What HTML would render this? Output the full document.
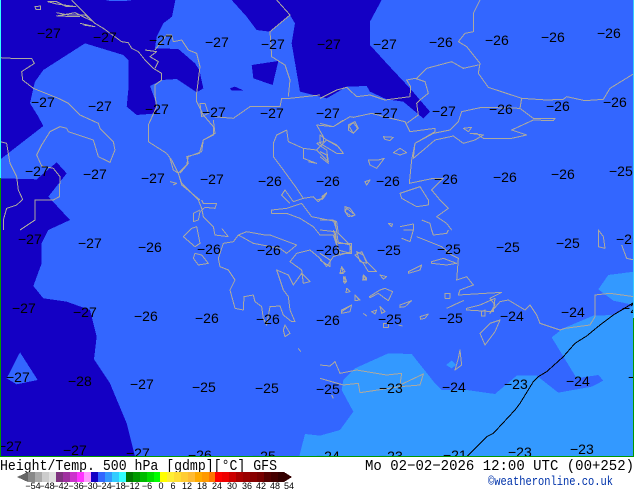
<!DOCTYPE html>
<html><head><meta charset="utf-8"><style>
html,body{margin:0;padding:0;background:#fff;width:634px;height:490px;overflow:hidden}
svg{display:block}
.c polyline,.c polygon{fill:none;stroke:#aca99f;stroke-width:3;stroke-linejoin:round;shape-rendering:crispEdges}
.l text{font:14px "Liberation Sans",sans-serif;fill:#000}
.t text{font:9px "Liberation Sans",sans-serif;fill:#000;text-anchor:middle}
</style></head><body>
<svg width="634" height="490" viewBox="0 0 634 490" xmlns="http://www.w3.org/2000/svg">
<defs><clipPath id="m"><rect x="0" y="0" width="634" height="456"/></clipPath></defs>
<rect width="634" height="490" fill="#fff"/>
<g clip-path="url(#m)">
<rect width="634" height="460" fill="#3366ff"/>
<g transform="scale(.33333)" shape-rendering="crispEdges">
<polygon fill="#1400c4" points="0,0 526,0 516,50 490,70 470,110 465,145 535,147 585,190 598,210 610,265 590,277 530,237 485,240 450,258 465,300 472,340 410,345 380,320 385,270 385,180 370,165 255,130 130,210 105,245 100,265 90,310 115,350 130,378 5,475 0,475"/>
<polygon fill="#1400c4" points="0,535 110,538 170,487 200,520 145,590 210,660 145,690 125,730 125,790 100,858 130,895 200,905 270,930 290,1010 282,1078 330,1150 380,1270 405,1370 0,1370"/>
<polygon fill="#3366ff" points="60,1057 113,1140 50,1153 20,1135"/>
<polygon fill="#3366ff" points="315,0 400,0 375,3 330,3"/>
<polygon fill="#1400c4" points="695,0 1145,0 1110,65 1110,135 1160,190 1230,265 1290,335 1270,355 1210,305 1160,298 1110,275 1100,258 1040,260 980,295 960,290 900,275 875,130 885,70 870,45 810,95 770,90 740,50"/>
<polygon fill="#1400c4" points="755,195 835,183 818,255 760,235"/>
<polygon fill="#1400c4" points="690,265 705,260 732,272 695,272"/>
</g>
<g transform="translate(320,230) scale(.33333)" shape-rendering="crispEdges">
<polygon fill="#3399ff" points="-65,690 -45,612 0,617 60,600 100,545 65,480 70,450 105,415 205,370 275,372 345,460 365,480 440,480 525,492 590,437 650,437 715,488 815,470 850,452 835,435 770,445 695,322 730,295 820,257 880,255 942,225 942,690"/>
<polygon fill="#3399ff" points="865,135 942,125 942,225 880,212 835,178"/>
<polygon fill="#3399ff" points="378,405 395,392 408,405 395,415"/>
</g>
<g class="c" transform="scale(.33333)">
<polyline points="215,0 240,25 285,70 310,85 365,125 385,128 395,145 415,155 435,180 460,205 485,220 485,240 465,255 465,285 470,320 445,375 445,425 500,460 515,480 535,520 545,555 600,600"/>
<polygon points="105,20 122,18 122,28 108,28"/>
<polyline points="143,5 170,5 200,20 228,20 170,12 143,5"/>
<polyline points="170,38 205,45 255,45 280,65 225,38 170,48 240,50"/>
<polyline points="240,70 285,80 250,75"/>
<polyline points="0,173 35,175 95,175 103,190 65,215 68,240 100,265 175,295 205,310 240,345 295,370 300,385 340,425 345,450 330,487 295,470 280,420 205,395 200,385 180,380 150,395 125,435 110,465 125,498 160,505 180,530 178,590 160,600 105,600 105,660 60,690"/>
<polyline points="0,425 20,430 30,490 50,530 55,570 68,598 50,615 20,625 10,660 10,690"/>
<polyline points="435,150 470,155 450,170 475,185 465,205"/>
<polyline points="465,150 500,105 515,105 520,125 545,120 565,150 590,160 600,200 590,280 590,305 610,345 640,380 640,405 610,420 598,460 560,470 565,490 540,520"/>
<polygon points="600,310 615,310 625,340 605,350"/>
<polyline points="640,350 700,355 750,320 840,320 845,295 870,295 960,285"/>
<polyline points="865,290 870,240 855,195 815,170 810,95 870,45 830,0"/>
</g>
<g class="c" transform="translate(320,0) scale(.33333)">
<polyline points="480,0 460,40 460,95 435,100 415,125 440,140 480,190 475,220 505,262 605,295 680,300 730,298 740,290 795,302 850,298 870,265 940,222"/>
<polyline points="475,195 430,205 395,185 320,205 290,235"/>
<polyline points="605,295 600,325 640,355 705,355 700,362 640,360 575,390 620,405 575,415 490,415 470,400 450,400 490,405 465,420 430,430 400,408 345,420 310,450 280,475 285,430 345,395 345,385 270,395 255,365 200,352 155,340 100,352 90,350 40,380 0,370"/>
<polyline points="0,295 50,270 80,262 110,290 150,285 195,300 270,290 272,260 260,240 285,235 315,245 325,280 300,300 290,310 295,345 260,370"/>
<polyline points="600,325 485,322 425,335 415,365 390,390 340,400 285,430 275,480 268,550 340,535 370,535 335,570 360,600 385,625 350,650 380,670 395,690"/>
<polygon points="85,380 100,368 113,385 100,400 85,390"/>
<polygon points="190,410 220,412 210,422 195,418"/>
<polygon points="220,458 240,445 260,458 240,465"/>
<polygon points="145,480 175,480 193,475 170,505 150,495"/>
<polygon points="240,580 270,570 300,560 325,600 325,615 290,620 245,595"/>
<polygon points="430,385 455,382 445,395"/>
<polygon points="0,405 20,420 50,435 70,460 50,460 25,445 0,430"/>
<polyline points="0,455 20,465 25,490 0,470"/>
<polygon points="135,545 150,540 140,555"/>
<polyline points="5,590 20,578 5,600"/>
<polygon points="75,620 90,625 105,645 85,650 75,635"/>
<polyline points="0,660 40,660 50,690"/>
<polygon points="205,670 218,672 215,680"/>
<polyline points="240,680 280,672 280,690"/>
<polyline points="305,660 330,670 335,690"/>
</g>
<g class="c" transform="translate(170,120) scale(.33333)">
<polyline points="350,30 320,45 310,70 310,110 340,150 380,205 400,235 370,245 345,210 335,225 360,250"/>
<polyline points="350,30 355,65 400,85 440,90 470,60 505,80 520,100"/>
<polyline points="440,70 470,90 475,125 440,90"/>
<polyline points="400,85 400,115 440,130 415,125"/>
<polyline points="440,15 490,20 520,0"/>
<polyline points="440,15 460,50 460,65 440,70"/>
<polygon points="535,15 555,5 565,25 550,40"/>
<polygon points="305,270 350,265 395,250 425,290 500,305 505,340 540,375 545,395 510,405 490,345 450,345 430,320 390,295 350,280 305,280"/>
<polyline points="130,0 135,40 100,60 95,95 55,110 50,135 25,160 35,190 85,240 95,265 100,290 130,320 135,345 175,350"/>
<polyline points="95,240 100,250 140,250 135,265 105,262 90,275 85,300 70,305 70,280 90,270"/>
<polygon points="65,325 80,320 90,370 75,380 40,350 50,340"/>
<polyline points="0,115 10,150 25,160"/>
<polyline points="155,325 175,350"/>
<polygon points="530,265 555,285 545,290 525,275"/>
<polyline points="400,235 430,230 445,245 470,220 460,235 440,240"/>
<polyline points="0,185 20,190 10,195"/>
</g>
<g class="c" transform="translate(170,220) scale(.33333)">
<polyline points="205,45 190,65 160,70 145,115 150,140 175,150 195,180 180,210 195,265 220,270 222,230 250,225 255,245 275,260 280,295 290,315 300,260 330,258 340,285 365,305 375,305 360,270 355,230 340,210 320,150 355,165 370,195 395,160 420,185 400,190 395,150 360,125 380,100 420,90 450,115 470,140 490,110 520,100 545,100 545,70 505,70 495,0"/>
<polyline points="205,45 230,35 285,45 300,45 380,75 350,100 330,85 250,70 205,45"/>
<polygon points="75,100 95,105 115,130 85,135 70,115"/>
<polygon points="345,315 360,340 345,350 340,330"/>
<polygon points="515,140 520,160 510,160"/>
<polygon points="525,170 530,185 520,185"/>
<polygon points="530,205 540,215 528,218"/>
<polygon points="555,225 570,240 555,242"/>
<polygon points="515,270 545,255 540,275 515,280"/>
<polygon points="560,95 580,105 590,130 570,125"/>
<polygon points="580,165 590,175 580,180"/>
<polyline points="385,385 392,395"/>
</g>
<g class="c" transform="translate(320,230) scale(.33333)">
<polyline points="290,20 340,40 365,50 395,75 415,85 410,150 440,140 460,165 420,180 415,195 545,187 510,205 525,225 510,250 540,215 565,210 615,240 630,225 650,255 660,280 720,300 735,295 810,285 825,260 825,195 870,190 942,200"/>
<polygon points="335,95 370,85 410,100 380,105 335,100"/>
<polygon points="265,125 305,105 300,120 265,130"/>
<polygon points="105,75 125,65 140,95 170,125 145,125 130,100"/>
<polygon points="540,270 525,305 495,345 480,310 510,280"/>
<polyline points="0,405 30,408 45,395 60,430 110,420 200,435 245,430 240,465 310,432 300,465 240,470 120,488 115,460 70,465 0,445"/>
<polygon points="420,360 425,405 405,420 415,385"/>
<polygon points="65,110 75,125 60,130"/><polygon points="70,140 80,155 73,160"/><polygon points="80,175 90,185 78,188"/><polygon points="105,195 118,210 105,212"/><polygon points="130,135 140,150 128,150"/><polygon points="180,135 200,140 190,147"/>
<polygon points="148,200 180,180 195,175 218,185 205,212 188,200 175,190 150,203"/>
<polygon points="65,245 95,225 90,245 65,250"/><polygon points="240,225 275,212 255,230 240,232"/><polygon points="155,245 170,240 165,252"/><polygon points="180,230 195,245 185,250"/><polygon points="300,260 325,252 315,265 302,268"/><polygon points="190,280 205,280 205,292 190,292"/><polyline points="235,285 248,288"/><polygon points="375,190 390,190 390,205 375,205"/><polyline points="380,235 430,212 390,230"/><polygon points="440,235 480,225 525,205 520,245 440,240"/><polygon points="485,245 495,240 495,258 485,258"/>
<polyline points="0,0 45,5 50,35 90,45 90,70 55,60 40,0"/>
<polyline points="250,0 280,0 270,35 245,25"/><polyline points="335,0 340,15 380,10 385,0"/>
<polygon points="835,0 850,20 855,55 835,50"/><polyline points="905,45 920,85 942,90"/>
<polyline points="130,250 140,258"/><polyline points="0,70 30,90 30,110 0,90"/>
<polyline points="35,495 40,505"/>
</g>
<polyline transform="translate(320,230) scale(.33333)" fill="none" stroke="#000" stroke-width="3" shape-rendering="crispEdges" points="440,680 500,620 520,610 585,540 600,520 640,455 655,440 680,425 730,380 765,340 800,318 840,285 880,255 941,218"/>
<g class="l">
<text x="37" y="38">−27</text><text x="93" y="42">−27</text><text x="149" y="45">−27</text><text x="205" y="47">−27</text><text x="261" y="49">−27</text><text x="317" y="49">−27</text><text x="373" y="49">−27</text><text x="429" y="47">−26</text><text x="485" y="45">−26</text><text x="541" y="42">−26</text><text x="597" y="38">−26</text>
<text x="31" y="107">−27</text><text x="88" y="111">−27</text><text x="145" y="114">−27</text><text x="202" y="117">−27</text><text x="260" y="118">−27</text><text x="316" y="118">−27</text><text x="374" y="118">−27</text><text x="432" y="116">−27</text><text x="489" y="114">−26</text><text x="546" y="111">−26</text><text x="603" y="107">−26</text>
<text x="25" y="176">−27</text><text x="83" y="179">−27</text><text x="141" y="183">−27</text><text x="200" y="184">−27</text><text x="258" y="186">−26</text><text x="316" y="186">−26</text><text x="376" y="186">−26</text><text x="434" y="184">−26</text><text x="493" y="182">−26</text><text x="551" y="179">−26</text><text x="609" y="176">−25</text>
<text x="18" y="244">−27</text><text x="78" y="248">−27</text><text x="138" y="252">−26</text><text x="197" y="254">−26</text><text x="257" y="255">−26</text><text x="316" y="255">−26</text><text x="377" y="255">−25</text><text x="437" y="254">−25</text><text x="496" y="252">−25</text><text x="556" y="248">−25</text><text x="616" y="244">−25</text>
<text x="12" y="313">−27</text><text x="73" y="317">−27</text><text x="134" y="321">−26</text><text x="195" y="323">−26</text><text x="256" y="324">−26</text><text x="316" y="325">−26</text><text x="378" y="324">−25</text><text x="439" y="323">−25</text><text x="500" y="321">−24</text><text x="561" y="317">−24</text><text x="622" y="313">−25</text>
<text x="6" y="382">−27</text><text x="68" y="386">−28</text><text x="130" y="389">−27</text><text x="192" y="392">−25</text><text x="255" y="393">−25</text><text x="316" y="394">−25</text><text x="379" y="393">−23</text><text x="442" y="392">−24</text><text x="504" y="389">−23</text><text x="566" y="386">−24</text><text x="628" y="382">−24</text>
<text x="-2" y="451">−27</text><text x="63" y="455">−27</text><text x="126" y="458">−27</text><text x="188" y="460">−26</text><text x="252" y="461">−25</text><text x="316" y="461">−24</text><text x="379" y="461">−23</text><text x="443" y="460">−21</text><text x="508" y="457">−23</text><text x="570" y="454">−23</text>
</g>
</g>
<rect x="0" y="0" width="1" height="178" fill="#33ffff"/>
<rect x="0" y="178" width="1" height="279" fill="#009900"/>
<rect x="633" y="0" width="1" height="318" fill="#33ccff"/>
<rect x="633" y="318" width="1" height="139" fill="#009900"/>
<rect x="0" y="456" width="634" height="1" fill="#009900"/>
<text x="0" y="470" textLength="277" lengthAdjust="spacingAndGlyphs" font-family="Liberation Mono" font-size="15">Height/Temp. 500 hPa [gdmp][°C] GFS</text>
<text x="365" y="470" textLength="269" lengthAdjust="spacingAndGlyphs" font-family="Liberation Mono" font-size="15">Mo 02−02−2026 12:00 UTC (00+252)</text>
<text x="488" y="485" textLength="125" lengthAdjust="spacingAndGlyphs" font-family="Liberation Mono" font-size="13" fill="#0033aa">©weatheronline.co.uk</text>
<g shape-rendering="crispEdges">
<polygon points="17,477 28,472 28,482" fill="#666"/>
<rect x="28" y="472" width="7" height="10" fill="#888"/><rect x="35" y="472" width="7" height="10" fill="#aaa"/><rect x="42" y="472" width="7" height="10" fill="#ccc"/><rect x="49" y="472" width="7" height="10" fill="#e0e0e0"/>
<rect x="56" y="472" width="7" height="10" fill="#7f337f"/><rect x="63" y="472" width="7" height="10" fill="#a030a0"/><rect x="70" y="472" width="7" height="10" fill="#cc33cc"/><rect x="77" y="472" width="7" height="10" fill="#ff33ff"/><rect x="84" y="472" width="7" height="10" fill="#ff99ff"/>
<rect x="91" y="472" width="7" height="10" fill="#1400c4"/><rect x="98" y="472" width="7" height="10" fill="#3366ff"/><rect x="105" y="472" width="7" height="10" fill="#3399ff"/><rect x="112" y="472" width="7" height="10" fill="#33ccff"/><rect x="119" y="472" width="7" height="10" fill="#33ffff"/>
<rect x="126" y="472" width="7" height="10" fill="#007700"/><rect x="133" y="472" width="7" height="10" fill="#009900"/><rect x="140" y="472" width="7" height="10" fill="#00bb00"/><rect x="147" y="472" width="7" height="10" fill="#00dd00"/><rect x="154" y="472" width="6" height="10" fill="#00ff00"/>
<rect x="160" y="472" width="7" height="10" fill="#ffff00"/><rect x="167" y="472" width="7" height="10" fill="#ffee33"/><rect x="174" y="472" width="7" height="10" fill="#ffdd33"/><rect x="181" y="472" width="7" height="10" fill="#ffcc33"/><rect x="188" y="472" width="7" height="10" fill="#ffbb33"/><rect x="195" y="472" width="7" height="10" fill="#ffaa00"/><rect x="202" y="472" width="7" height="10" fill="#ff9900"/><rect x="209" y="472" width="6" height="10" fill="#ff7700"/>
<rect x="215" y="472" width="7" height="10" fill="#ff0000"/><rect x="222" y="472" width="7" height="10" fill="#ee0000"/><rect x="229" y="472" width="7" height="10" fill="#cc0000"/><rect x="236" y="472" width="7" height="10" fill="#aa0000"/><rect x="243" y="472" width="7" height="10" fill="#990000"/><rect x="250" y="472" width="7" height="10" fill="#880000"/><rect x="257" y="472" width="7" height="10" fill="#770000"/><rect x="264" y="472" width="7" height="10" fill="#550000"/><rect x="271" y="472" width="7" height="10" fill="#440000"/><rect x="278" y="472" width="6" height="10" fill="#330000"/>
<polygon points="284,472 292,477 284,482" fill="#300"/>
</g>
<g class="t">
<text x="33" y="489">−54</text><text x="47" y="489">−48</text><text x="61" y="489">−42</text><text x="76" y="489">−36</text><text x="90" y="489">−30</text><text x="104" y="489">−24</text><text x="118" y="489">−18</text><text x="132" y="489">−12</text><text x="147" y="489">−6</text><text x="161" y="489">0</text><text x="173" y="489">6</text><text x="187" y="489">12</text><text x="202" y="489">18</text><text x="217" y="489">24</text><text x="232" y="489">30</text><text x="247" y="489">36</text><text x="261" y="489">42</text><text x="275" y="489">48</text><text x="289" y="489">54</text>
</g>
</svg>
</body></html>
